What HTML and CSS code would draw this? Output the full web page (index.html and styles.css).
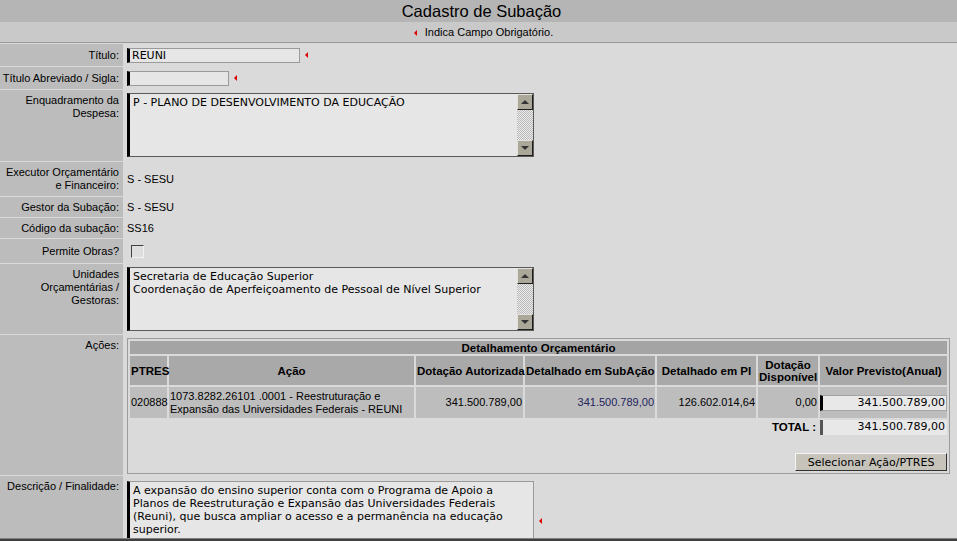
FILE: index.html
```html
<!DOCTYPE html>
<html lang="pt-BR">
<head>
  <meta charset="UTF-8">
  <meta name="viewport" content="width=device-width, initial-scale=1.0">
  <title>Cadastro de Subação</title>
  <link rel="stylesheet" href="styles.css">
</head>
<body>
  <div class="page-title">Cadastro de Subação</div>
  <div class="legend"><span class="req"></span>Indica Campo Obrigatório.</div>

  <div class="form">
    <div class="row h-22">
      <div class="label">Título:</div>
      <div class="value"><div class="input w-titulo">REUNI</div><span class="req"></span></div>
    </div>

    <div class="row h-22">
      <div class="label">Título Abreviado / Sigla:</div>
      <div class="value"><div class="input w-sigla"></div><span class="req"></span></div>
    </div>

    <div class="row h-71">
      <div class="label top">Enquadramento da<br>Despesa:</div>
      <div class="value top">
        <div class="textarea">
          <div class="text">P - PLANO DE DESENVOLVIMENTO DA EDUCAÇÃO</div>
          <div class="scrollbar">
            <div class="sb-btn"><span class="arrow up"></span></div>
            <div class="sb-track"></div>
            <div class="sb-btn"><span class="arrow down"></span></div>
          </div>
        </div>
      </div>
    </div>

    <div class="row h-34">
      <div class="label">Executor Orçamentário<br>e Financeiro:</div>
      <div class="value">S - SESU</div>
    </div>

    <div class="row h-20">
      <div class="label">Gestor da Subação:</div>
      <div class="value">S - SESU</div>
    </div>

    <div class="row h-20">
      <div class="label">Código da subação:</div>
      <div class="value">SS16</div>
    </div>

    <div class="row h-24">
      <div class="label">Permite Obras?</div>
      <div class="value"><span class="checkbox"></span></div>
    </div>

    <div class="row h-70">
      <div class="label top">Unidades<br>Orçamentárias /<br>Gestoras:</div>
      <div class="value top">
        <div class="textarea">
          <div class="text">Secretaria de Educação Superior<br>Coordenação de Aperfeiçoamento de Pessoal de Nível Superior</div>
          <div class="scrollbar">
            <div class="sb-btn"><span class="arrow up"></span></div>
            <div class="sb-track"></div>
            <div class="sb-btn"><span class="arrow down"></span></div>
          </div>
        </div>
      </div>
    </div>

    <div class="row h-140">
      <div class="label top">Ações:</div>
      <div class="value top">
        <div class="detail">
          <table class="budget">
            <colgroup>
              <col style="width:37px"><col style="width:245px"><col style="width:107px"><col style="width:130px">
              <col style="width:99px"><col style="width:60px"><col style="width:127px">
            </colgroup>
            <tr class="caption"><th colspan="7">Detalhamento Orçamentário</th></tr>
            <tr class="heads">
              <th>PTRES</th>
              <th>Ação</th>
              <th>Dotação Autorizada</th>
              <th>Detalhado em SubAção</th>
              <th>Detalhado em PI</th>
              <th>Dotação<br>Disponível</th>
              <th>Valor Previsto(Anual)</th>
            </tr>
            <tr class="data">
              <td>020888</td>
              <td>1073.8282.26101 .0001 - Reestruturação e<br>Expansão das Universidades Federais - REUNI</td>
              <td class="num">341.500.789,00</td>
              <td class="num navy">341.500.789,00</td>
              <td class="num">126.602.014,64</td>
              <td class="num">0,00</td>
              <td class="money-cell"><div class="money">341.500.789,00</div></td>
            </tr>
            <tr class="total">
              <td colspan="6" class="total-label">TOTAL :</td>
              <td><div class="money total-box">341.500.789,00</div></td>
            </tr>
            <tr class="actions">
              <td colspan="7"><button class="btn">Selecionar Ação/PTRES</button></td>
            </tr>
          </table>
        </div>
      </div>
    </div>

    <div class="row h-rest">
      <div class="label top">Descrição / Finalidade:</div>
      <div class="value top">
        <div class="textarea desc">
          <div class="text">A expansão do ensino superior conta com o Programa de Apoio a<br>Planos de Reestruturação e Expansão das Universidades Federais<br>(Reuni), que busca ampliar o acesso e a permanência na educação<br>superior.</div>
        </div>
        <span class="req desc-req"></span>
      </div>
    </div>
  </div>

  <div class="frame-bottom"></div>
</body>
</html>
```

FILE: styles.css
```css
html, body {
  margin: 0;
  height: 100%;
  overflow: hidden;
}

body {
  background: #dadada;
  font-family: "Liberation Sans", Arial, sans-serif;
  font-size: 11px;
  color: #000;
}

.page-title {
  height: 22px;
  line-height: 22px;
  background: #b5b5b5;
  text-align: center;
  font-size: 16.5px;
  padding-left: 6px;
}

.legend {
  height: 20px;
  line-height: 20px;
  background: #c9c9c9;
  border-bottom: 1px solid #999;
  text-align: center;
  padding-left: 10px;
}

.legend .req {
  margin: 0 8px 0 0;
}

/* marcador de campo obrigatorio */
.req {
  display: inline-block;
  width: 0;
  height: 0;
  border-top: 3px solid transparent;
  border-bottom: 3px solid transparent;
  border-right: 3px solid #e00000;
  margin-left: 5px;
  vertical-align: middle;
}

.form {
  display: flex;
  flex-direction: column;
  gap: 1px;
  padding-top: 1px;
}

.row {
  display: grid;
  grid-template-columns: 123px 1fr;
}

.h-20 { height: 20px; }
.h-22 { height: 22px; }
.h-24 { height: 24px; }
.h-34 { height: 34px; }
.h-70 { height: 70px; }
.h-71 { height: 71px; }
.h-140 { height: 140px; }
.h-rest { height: 80px; }

.label {
  background: #bcbcbc;
  display: flex;
  align-items: center;
  justify-content: flex-end;
  text-align: right;
  padding-right: 4px;
  line-height: 13px;
}

.label.top {
  align-items: flex-start;
  padding-top: 4px;
}

.value {
  display: flex;
  align-items: center;
  padding-left: 4px;
  line-height: 13px;
}

.value.top {
  align-items: flex-start;
  padding-top: 3px;
}

.input {
  box-sizing: border-box;
  height: 15px;
  border: 1px solid #9a9a9a;
  border-left: 3px solid #000;
  background: #e6e6e6;
  font-family: "DejaVu Sans", Verdana, sans-serif;
  font-size: 11px;
  line-height: 13px;
  padding: 0 2px;
}

.w-titulo { width: 173px; }
.w-sigla { width: 102px; }

.textarea {
  box-sizing: border-box;
  width: 407px;
  height: 64px;
  border: 1px solid #5a5a5a;
  border-left: 3px solid #000;
  background: #e6e6e6;
  display: flex;
}

.textarea .text {
  flex: 1;
  padding: 2px 3px;
  font-family: "DejaVu Sans", Verdana, sans-serif;
  font-size: 11px;
  line-height: 13px;
  white-space: nowrap;
  overflow: hidden;
}

.textarea.desc {
  height: 70px;
  border-color: #9a9a9a;
  border-left-color: #000;
  margin-top: 2px;
}

.desc-req {
  margin-top: 39px;
}

.scrollbar {
  width: 16px;
  display: flex;
  flex-direction: column;
}

.sb-btn {
  box-sizing: border-box;
  height: 16px;
  background: #aca899;
  border: 1px solid;
  border-color: #e4e2dc #1e1e1e #1e1e1e #e4e2dc;
  display: flex;
  align-items: center;
  justify-content: center;
}

.sb-track {
  flex: 1;
  background: repeating-conic-gradient(#b8b8b8 0 25%, #ececec 0 50%) 0 0 / 2px 2px;
}

.arrow {
  width: 0;
  height: 0;
  border-left: 4px solid transparent;
  border-right: 4px solid transparent;
}

.arrow.up { border-bottom: 4px solid #333; }
.arrow.down { border-top: 4px solid #333; }

.checkbox {
  box-sizing: border-box;
  width: 13px;
  height: 13px;
  margin-left: 4px;
  border: 1px solid;
  border-color: #404040 #f0f0f0 #f0f0f0 #404040;
  background: #dedede;
}

.detail {
  border: 1px solid #9c9c9c;
  background: #dadada;
}

.budget {
  table-layout: fixed;
  width: 821px;
  border-spacing: 2px;
  font-size: 11px;
}

.budget th,
.budget td {
  padding: 0 1px;
  line-height: 13px;
}

.budget th {
  font-size: 11.5px;
  font-weight: bold;
  background: #a9a9a9;
  white-space: nowrap;
  line-height: 12px;
}

.caption th {
  height: 13px;
  background: #a4a4a4;
}

.heads th {
  height: 29px;
}

.data td {
  height: 31px;
  background: #bdbdbd;
  white-space: nowrap;
}

.num { text-align: right; }
.navy { color: #24245e; }

.budget td.money-cell {
  padding: 0;
}

.money {
  box-sizing: border-box;
  height: 16px;
  border: 1px solid #a4a4a4;
  border-left: 3px solid #000;
  background: #e8e8e8;
  font-family: "DejaVu Sans", Verdana, sans-serif;
  font-size: 11px;
  line-height: 14px;
  text-align: right;
  padding-right: 1px;
}

.total td {
  height: 15px;
  padding: 0;
}

.total-label {
  text-align: right;
  font-weight: bold;
  font-size: 11.5px;
  padding-right: 2px !important;
}

.money.total-box {
  height: 15px;
  border: none;
  border-left: 3px solid #555;
  padding-right: 2px;
}

.actions td {
  height: 34px;
  text-align: right;
  vertical-align: bottom;
  padding: 0;
}

.btn {
  box-sizing: border-box;
  width: 152px;
  height: 18px;
  padding: 0;
  background: #c6c3bb;
  border: 1px solid;
  border-color: #f4f4f4 #303030 #303030 #f4f4f4;
  font-family: "DejaVu Sans", Verdana, sans-serif;
  font-size: 11px;
  color: #000;
}

.frame-bottom {
  position: fixed;
  left: 0;
  right: 0;
  bottom: 0;
  height: 2px;
  background: #404040;
  border-top: 1px solid #808080;
}
```
